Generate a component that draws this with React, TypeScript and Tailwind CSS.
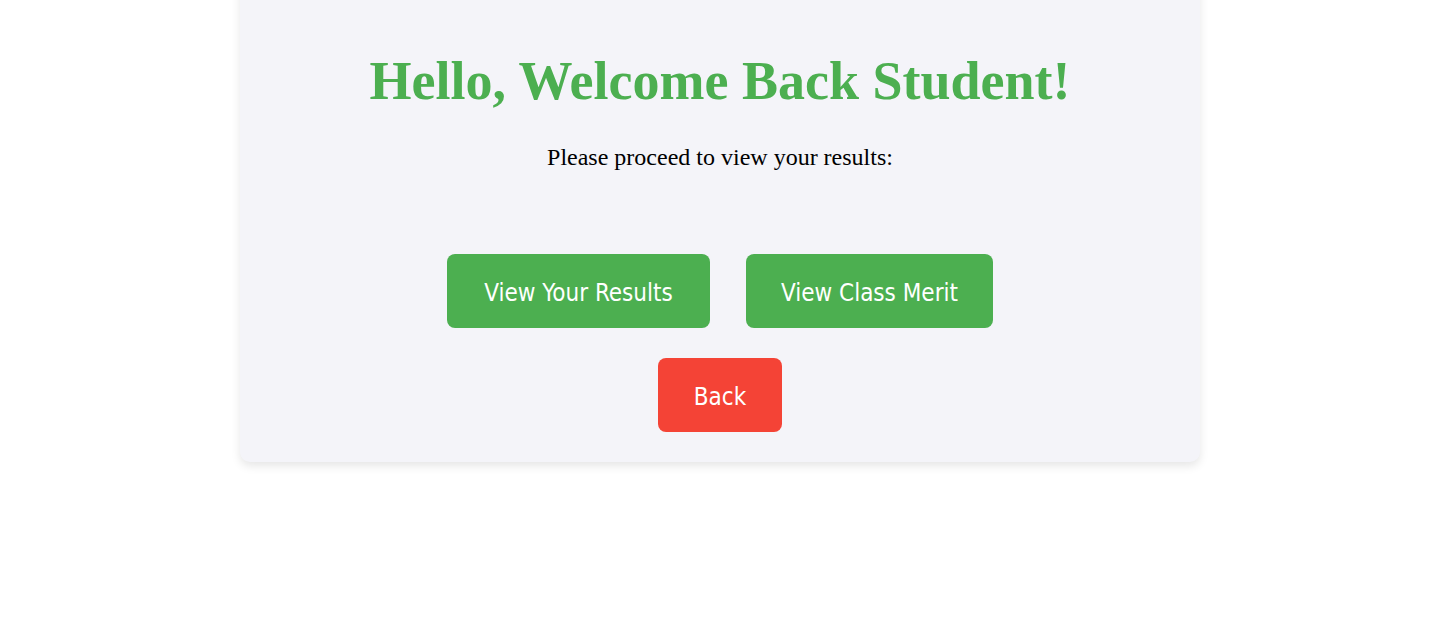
export default function App() {
  return (
    <div className="min-h-screen bg-white overflow-hidden">
      <div className="w-[1440px]">
        <div className="w-[960px] mx-auto -mt-[20px] pt-[70px] pb-[30px] bg-[#f4f4f9] rounded-[10px] shadow-[0_4px_10px_rgba(0,0,0,0.1)] text-center">
          <h1 className="font-['Liberation_Serif',serif] font-bold text-[54px] leading-[62px] text-[#4caf50]">
            Hello, Welcome Back Student!
          </h1>
          <p className="mt-[31px] font-['Liberation_Serif',serif] text-[24px] leading-[28px] text-black">
            Please proceed to view your results:
          </p>
          <div className="mt-[83px] flex flex-col items-center gap-[30px] font-['DejaVu_Sans_Condensed','DejaVu_Sans',sans-serif] text-[24px] text-white">
            <div className="flex gap-[36px]">
              <button className="h-[74px] w-[263px] pt-[4px] bg-[#4caf50] rounded-[8px]">View Your Results</button>
              <button className="h-[74px] w-[247px] pt-[4px] bg-[#4caf50] rounded-[8px]">View Class Merit</button>
            </div>
            <button className="h-[74px] w-[124px] pt-[4px] bg-[#f44336] rounded-[8px]">Back</button>
          </div>
        </div>
      </div>
    </div>
  );
}
